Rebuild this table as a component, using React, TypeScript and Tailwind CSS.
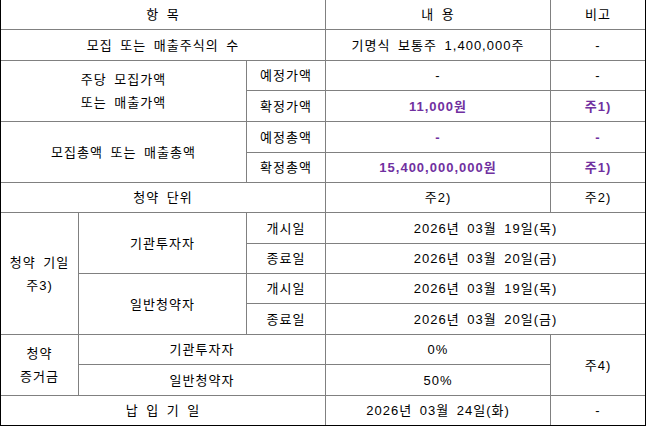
import React from "react";

const C = "bg-white flex items-center justify-center text-center";
const P = "text-[#7030a0] font-bold";

export default function App() {
  return (
    <div
      className="w-[646px] h-[427px] bg-white text-black text-[13px] leading-none tracking-[1px] [word-spacing:3px]"
      style={{ fontFamily: '"Liberation Sans", "Noto Sans CJK KR", sans-serif' }}
    >
      <div className="grid grid-cols-[77px_167px_78px_224px_94px] grid-rows-[29px_30px_29px_30px_30px_29px_29px_30px_29px_29px_30px_29px_30px_29px] gap-px bg-[#808080] border-l border-r border-b border-l-black border-r-black border-b-black w-[646px]">
        {/* header */}
        <div className={`${C} col-span-3 bg-[#d9d9d9]`}>항 목</div>
        <div className={`${C} bg-[#d9d9d9]`}>내 용</div>
        <div className={`${C} bg-[#d9d9d9]`}>비고</div>

        {/* row 2 */}
        <div className={`${C} col-span-3`}>모집 또는 매출주식의 수</div>
        <div className={C}>기명식 보통주 1,400,000주</div>
        <div className={C}>-</div>

        {/* rows 3-4 */}
        <div className={`${C} col-span-2 row-span-2 flex-col gap-[10px]`}>
          <span>주당 모집가액</span>
          <span>또는 매출가액</span>
        </div>
        <div className={C}>예정가액</div>
        <div className={C}>-</div>
        <div className={C}>-</div>
        <div className={C}>확정가액</div>
        <div className={`${C} ${P}`}>11,000원</div>
        <div className={`${C} ${P}`}>주1)</div>

        {/* rows 5-6 */}
        <div className={`${C} col-span-2 row-span-2`}>모집총액 또는 매출총액</div>
        <div className={C}>예정총액</div>
        <div className={`${C} ${P}`}>-</div>
        <div className={`${C} ${P}`}>-</div>
        <div className={C}>확정총액</div>
        <div className={`${C} ${P}`}>15,400,000,000원</div>
        <div className={`${C} ${P}`}>주1)</div>

        {/* row 7 */}
        <div className={`${C} col-span-3`}>청약 단위</div>
        <div className={C}>주2)</div>
        <div className={C}>주2)</div>

        {/* rows 8-11 */}
        <div className={`${C} row-span-4 flex-col gap-[10px]`}>
          <span>청약 기일</span>
          <span>주3)</span>
        </div>
        <div className={`${C} row-span-2`}>기관투자자</div>
        <div className={C}>개시일</div>
        <div className={`${C} col-span-2`}>2026년 03월 19일(목)</div>
        <div className={C}>종료일</div>
        <div className={`${C} col-span-2`}>2026년 03월 20일(금)</div>
        <div className={`${C} row-span-2`}>일반청약자</div>
        <div className={C}>개시일</div>
        <div className={`${C} col-span-2`}>2026년 03월 19일(목)</div>
        <div className={C}>종료일</div>
        <div className={`${C} col-span-2`}>2026년 03월 20일(금)</div>

        {/* rows 12-13 */}
        <div className={`${C} row-span-2 flex-col gap-[10px]`}>
          <span>청약</span>
          <span>증거금</span>
        </div>
        <div className={`${C} col-span-2`}>기관투자자</div>
        <div className={C}>0%</div>
        <div className={`${C} row-span-2`}>주4)</div>
        <div className={`${C} col-span-2`}>일반청약자</div>
        <div className={C}>50%</div>

        {/* row 14 */}
        <div className={`${C} col-span-3`}>납 입 기 일</div>
        <div className={C}>2026년 03월 24일(화)</div>
        <div className={C}>-</div>
      </div>
    </div>
  );
}
